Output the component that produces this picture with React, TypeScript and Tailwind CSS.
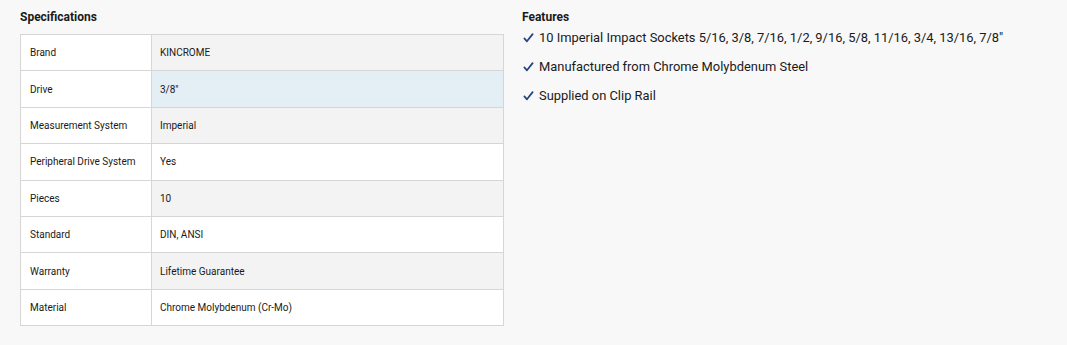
const specs: { label: string; value: string; bg: string }[] = [
  { label: 'Brand', value: 'KINCROME', bg: 'bg-[#f3f3f3]' },
  { label: 'Drive', value: '3/8"', bg: 'bg-[#e3eef5]' },
  { label: 'Measurement System', value: 'Imperial', bg: 'bg-[#f3f3f3]' },
  { label: 'Peripheral Drive System', value: 'Yes', bg: 'bg-white' },
  { label: 'Pieces', value: '10', bg: 'bg-[#f3f3f3]' },
  { label: 'Standard', value: 'DIN, ANSI', bg: 'bg-white' },
  { label: 'Warranty', value: 'Lifetime Guarantee', bg: 'bg-[#f3f3f3]' },
  { label: 'Material', value: 'Chrome Molybdenum (Cr-Mo)', bg: 'bg-white' },
];

const features = [
  '10 Imperial Impact Sockets 5/16, 3/8, 7/16, 1/2, 9/16, 5/8, 11/16, 3/4, 13/16, 7/8"',
  'Manufactured from Chrome Molybdenum Steel',
  'Supplied on Clip Rail',
];

const Tick = () => (
  <svg viewBox="0 0 12 12" className="h-[12px] w-[11px] shrink-0" fill="none">
    <path d="M1.5 6.5 L4.3 9.6 L10.5 1.8" stroke="#26457e" strokeWidth="1.9" strokeLinecap="round" strokeLinejoin="round" />
  </svg>
);

export default function App() {
  return (
    <div className="min-h-[345px] w-[1067px] bg-[#f8f8f8] font-['Roboto',sans-serif] text-[#1a1a1a]">
      <div className="flex gap-[18px] pl-[20px] pt-[10px]">
        {/* Specifications table */}
        <div className="w-[484px]">
          <h2 className="mb-[9px] text-[12px] leading-[15px] font-bold">Specifications</h2>
          <table className="w-full border-collapse border border-[#d6d6d6] text-[10px]">
            <tbody>
              {specs.map((row) => (
                <tr key={row.label} className="h-[36.4px]">
                  <td className="w-[131px] border border-[#d6d6d6] bg-white pl-[9px]">{row.label}</td>
                  <td className={`border border-[#d6d6d6] pl-[8px] ${row.bg}`}>{row.value}</td>
                </tr>
              ))}
            </tbody>
          </table>
        </div>

        {/* Features list */}
        <div>
          <h2 className="mb-[4px] text-[12px] leading-[15px] font-bold">Features</h2>
          <ul className="flex flex-col gap-[11px] text-[12.9px] leading-[18px]">
            {features.map((f) => (
              <li key={f} className="flex items-center gap-[5px] pl-[1px]">
                <Tick />
                <span>{f}</span>
              </li>
            ))}
          </ul>
        </div>
      </div>
    </div>
  );
}
